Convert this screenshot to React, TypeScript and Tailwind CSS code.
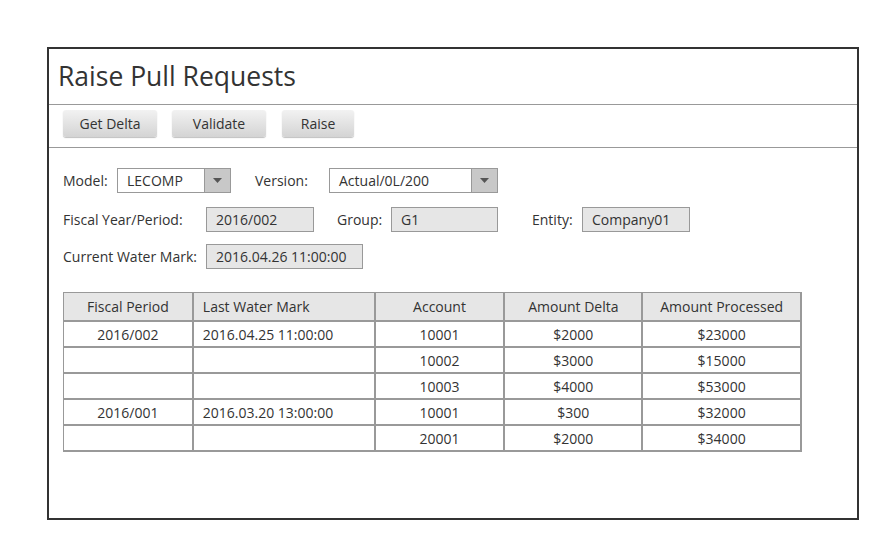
import React from 'react';

const font = { fontFamily: '"Open Sans", "Noto Sans", sans-serif' };

const rows = [
  { period: '2016/002', mark: '2016.04.25 11:00:00', account: '10001', delta: '$2000', processed: '$23000' },
  { period: '', mark: '', account: '10002', delta: '$3000', processed: '$15000' },
  { period: '', mark: '', account: '10003', delta: '$4000', processed: '$53000' },
  { period: '2016/001', mark: '2016.03.20 13:00:00', account: '10001', delta: '$300', processed: '$32000' },
  { period: '', mark: '', account: '20001', delta: '$2000', processed: '$34000' },
];

const ToolButton = ({ label, w }: { label: string; w: string }) => (
  <div
    className={`${w} h-[27px] flex items-center justify-center rounded-[3px] text-[14px] text-[#333] bg-gradient-to-b from-[#f2f2f2] to-[#d4d4d4] shadow-[0_1px_1px_rgba(0,0,0,0.25)]`}
  >
    {label}
  </div>
);

const Select = ({ value, w }: { value: string; w: string }) => (
  <div className={`${w} h-[25px] flex border border-[#999] bg-white`}>
    <div className="flex-1 flex items-center pl-[9px] text-[14px] text-[#333]">{value}</div>
    <div className="w-[26px] flex items-center justify-center bg-[#c8c8c8] border-l border-[#999]">
      <svg width="9" height="5" viewBox="0 0 9 5">
        <path d="M0 0h9L4.5 5z" fill="#555" />
      </svg>
    </div>
  </div>
);

const Field = ({ value, w }: { value: string; w: string }) => (
  <div className={`${w} h-[25px] flex items-center pl-[9px] border border-[#999] bg-[#e6e6e6] text-[14px] text-[#333]`}>
    {value}
  </div>
);

const cols = ['w-[130px]', 'w-[182px]', 'w-[130px]', 'w-[138px]', 'w-[159px]'];

export default function App() {
  return (
    <div className="w-[890px] h-[551px] bg-white pt-[47px] pl-[47px]" style={font}>
      <div className="w-[812px] h-[473px] border-2 border-[#333] flex flex-col">
        <div className="h-[56px] flex items-center pl-[9px] text-[26.5px] text-[#333] border-b border-[#999]">
          Raise Pull Requests
        </div>
        <div className="h-[43px] flex items-start pt-[5px] pl-[14px] gap-[15px] border-b border-[#999]">
          <ToolButton label="Get Delta" w="w-[94px]" />
          <ToolButton label="Validate" w="w-[94px]" />
          <div className="ml-[1px]">
            <ToolButton label="Raise" w="w-[72px]" />
          </div>
        </div>
        <div className="flex flex-col pl-[14px] pt-[20px] text-[14px] text-[#333]">
          <div className="flex items-center h-[25px]">
            <span className="w-[54px]">Model:</span>
            <Select value="LECOMP" w="w-[114px]" />
            <span className="ml-[24px] w-[74px]">Version:</span>
            <Select value="Actual/0L/200" w="w-[169px]" />
          </div>
          <div className="flex items-center h-[25px] mt-[14px]">
            <span className="w-[143px] whitespace-nowrap">Fiscal Year/Period:</span>
            <Field value="2016/002" w="w-[108px]" />
            <span className="ml-[23px] w-[54px]">Group:</span>
            <Field value="G1" w="w-[107px]" />
            <span className="ml-[34px] w-[50px]">Entity:</span>
            <Field value="Company01" w="w-[108px]" />
          </div>
          <div className="flex items-center h-[25px] mt-[12px]">
            <span className="w-[143px] whitespace-nowrap">Current Water Mark:</span>
            <Field value="2016.04.26 11:00:00" w="w-[157px]" />
          </div>
          <div className="mt-[23px] w-[739px] border-t border-l border-[#999] flex flex-col">
            <div className="flex h-[29px] bg-[#e6e6e6]">
              {['Fiscal Period', 'Last Water Mark', 'Account', 'Amount Delta', 'Amount Processed'].map((h, i) => (
                <div
                  key={h}
                  className={`${cols[i]} flex items-center ${i === 1 ? 'justify-start pl-[9px]' : 'justify-center'} border-r-2 border-b-2 border-[#999]`}
                >
                  {h}
                </div>
              ))}
            </div>
            {rows.map((r, ri) => (
              <div key={ri} className="flex h-[26px]">
                {[r.period, r.mark, r.account, r.delta, r.processed].map((v, i) => (
                  <div
                    key={i}
                    className={`${cols[i]} flex items-center ${i === 1 ? 'justify-start pl-[9px]' : 'justify-center'} border-r-2 border-b-2 border-[#999]`}
                  >
                    {v}
                  </div>
                ))}
              </div>
            ))}
          </div>
        </div>
      </div>
    </div>
  );
}
